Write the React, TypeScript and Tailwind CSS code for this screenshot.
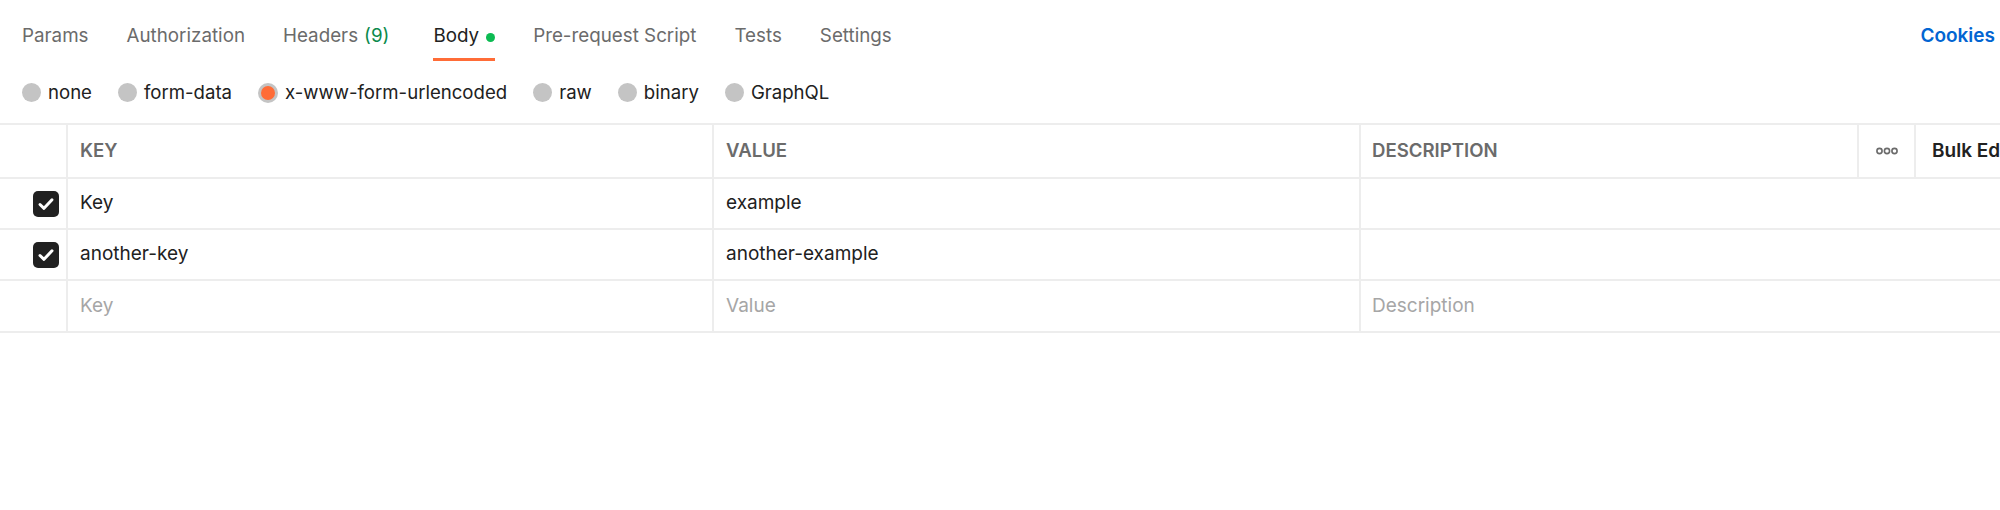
import React from 'react';

const tabs = [
  { label: 'Params' },
  { label: 'Authorization' },
  { label: 'Headers', count: '(9)' },
  { label: 'Body', active: true, dot: true },
  { label: 'Pre-request Script' },
  { label: 'Tests' },
  { label: 'Settings' },
];

const bodyTypes = ['none', 'form-data', 'x-www-form-urlencoded', 'raw', 'binary', 'GraphQL'];

const rows = [
  { key: 'Key', value: 'example' },
  { key: 'another-key', value: 'another-example' },
];

function CheckBox() {
  return (
    <div className="flex h-[26px] w-[26px] items-center justify-center rounded-[5px] bg-[#212121]">
      <svg width="20" height="20" viewBox="0 0 20 20" fill="none">
        <path d="M4 10.5l4 3.8L16 5.8" stroke="#fff" strokeWidth="3" strokeLinecap="round" strokeLinejoin="round" />
      </svg>
    </div>
  );
}

function Dots() {
  return (
    <svg width="22" height="8" viewBox="0 0 22 8" fill="none">
      <circle cx="3.5" cy="4" r="2.6" stroke="#6b6b6b" strokeWidth="1.6" />
      <circle cx="11" cy="4" r="2.6" stroke="#6b6b6b" strokeWidth="1.6" />
      <circle cx="18.5" cy="4" r="2.6" stroke="#6b6b6b" strokeWidth="1.6" />
    </svg>
  );
}

export default function App() {
  return (
    <div className="h-[510px] w-[2000px] overflow-hidden bg-white font-['Inter',sans-serif]">
      {/* tabs */}
      <div className="flex h-[61px] items-start justify-between">
        <div className="flex gap-[38px] pl-[22px]">
          {tabs.map((t) => (
            <div
              key={t.label}
              className={`flex items-center gap-[7px] whitespace-nowrap border-b-[3px] pb-[8px] pt-[22px] text-[18.8px] leading-[28px] ${
                t.active ? 'ml-[6px] border-[#ff6c37] text-[#212121]' : 'border-transparent text-[#6b6b6b]'
              }`}
            >
              <span>
                {t.label}
                {t.count && <span className="ml-[6px] text-[#0b8a4c]">{t.count}</span>}
              </span>
              {t.dot && <span className="mt-[2px] h-[9px] w-[9px] rounded-full bg-[#0cbb52]" />}
            </div>
          ))}
        </div>
        <div className="pr-[5px] pt-[22px] text-[19px] font-semibold leading-[28px] text-[#0265d2]">Cookies</div>
      </div>

      {/* body type radios */}
      <div className="flex h-[62px] items-center gap-[26px] pl-[22px] pt-[2px]">
        {bodyTypes.map((b) => (
          <div key={b} className="flex items-center gap-[7px] text-[18.6px] text-[#212121]">
            {b === 'x-www-form-urlencoded' ? (
              <span className="flex h-[20px] w-[20px] items-center justify-center rounded-full bg-[#c4c4c4]">
                <span className="h-[14px] w-[14px] rounded-full bg-[#ff6c37]" />
              </span>
            ) : (
              <span className="h-[19px] w-[19px] rounded-full bg-[#c4c4c4]" />
            )}
            <span>{b}</span>
          </div>
        ))}
      </div>

      {/* table */}
      <div className="border-t-2 border-[#ededed]">
        <div className="flex h-[54px] border-b-2 border-[#ededed] text-[18.6px] font-semibold text-[#6b6b6b]">
          <div className="w-[66px] shrink-0" />
          <div className="flex w-[646px] shrink-0 items-center border-l-2 border-[#ededed] pl-[12px]">KEY</div>
          <div className="flex w-[647px] shrink-0 items-center border-l-2 border-[#ededed] pl-[12px]">VALUE</div>
          <div className="flex w-[498px] shrink-0 items-center border-l-2 border-[#ededed] pl-[11px]">DESCRIPTION</div>
          <div className="flex w-[57px] shrink-0 items-center justify-center border-l-2 border-[#ededed]">
            <Dots />
          </div>
          <div className="flex shrink-0 items-center whitespace-nowrap border-l-2 border-[#ededed] pl-[16px] text-[19px] font-semibold text-[#212121]">
            Bulk Edit
          </div>
        </div>

        {rows.map((r) => (
          <div key={r.key} className="flex h-[51px] border-b-2 border-[#ededed] text-[19px] text-[#212121]">
            <div className="flex w-[66px] shrink-0 items-center justify-end pr-[7px]">
              <CheckBox />
            </div>
            <div className="flex w-[646px] shrink-0 items-center border-l-2 border-[#ededed] pl-[12px]">{r.key}</div>
            <div className="flex w-[647px] shrink-0 items-center border-l-2 border-[#ededed] pl-[12px]">{r.value}</div>
            <div className="flex flex-1 items-center border-l-2 border-[#ededed]" />
          </div>
        ))}

        <div className="flex h-[52px] border-b-2 border-[#ededed] text-[19px] text-[#a6a6a6]">
          <div className="w-[66px] shrink-0" />
          <div className="flex w-[646px] shrink-0 items-center border-l-2 border-[#ededed] pl-[12px]">Key</div>
          <div className="flex w-[647px] shrink-0 items-center border-l-2 border-[#ededed] pl-[12px]">Value</div>
          <div className="flex flex-1 items-center border-l-2 border-[#ededed] pl-[11px]">Description</div>
        </div>
      </div>
    </div>
  );
}
